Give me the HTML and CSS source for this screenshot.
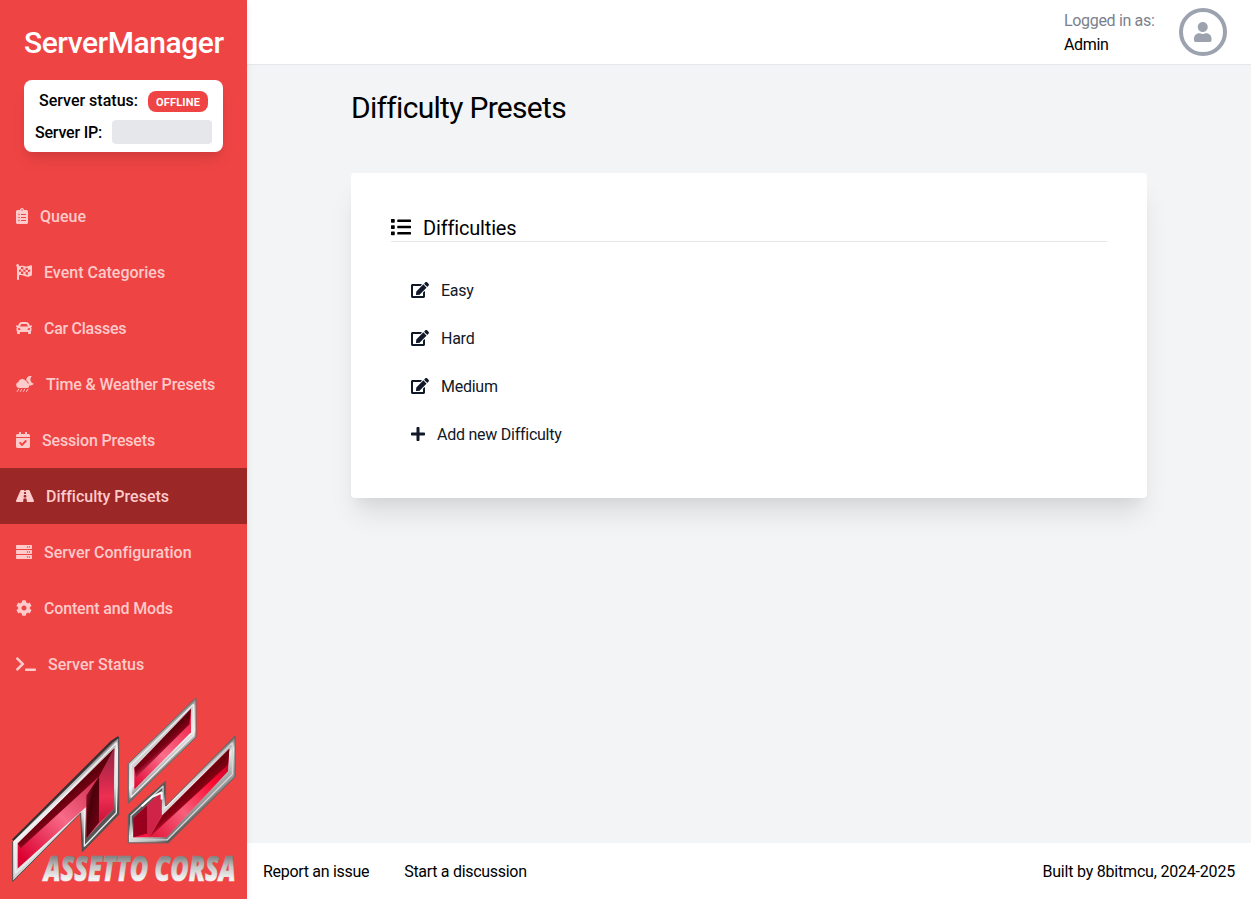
FILE: index.html
```html
<!DOCTYPE html>
<html lang="en">
<head>
<meta charset="utf-8">
<title>ServerManager</title>
<link rel="stylesheet" href="styles.css">
</head>
<body>
<div class="app">
<aside class="sidebar">
  <div class="brand"><span>ServerManager</span></div>
  <div class="status">
    <div class="status-row"><span class="status-label">Server status:</span><span class="badge">OFFLINE</span></div>
    <div class="status-row"><span class="status-ip">Server IP:</span><span class="ip"></span></div>
  </div>
  <nav class="nav">
    <a class="item"><svg width="12" height="16" viewBox="0 0 384 512"><path d="M336 64h-80c0-35.3-28.7-64-64-64s-64 28.7-64 64H48C21.5 64 0 85.5 0 112v352c0 26.5 21.5 48 48 48h288c26.5 0 48-21.5 48-48V112c0-26.5-21.5-48-48-48zM96 424c-13.3 0-24-10.7-24-24s10.7-24 24-24 24 10.7 24 24-10.7 24-24 24zm0-96c-13.3 0-24-10.7-24-24s10.7-24 24-24 24 10.7 24 24-10.7 24-24 24zm0-96c-13.3 0-24-10.7-24-24s10.7-24 24-24 24 10.7 24 24-10.7 24-24 24zm96-192c13.3 0 24 10.7 24 24s-10.7 24-24 24-24-10.7-24-24 10.7-24 24-24zm128 368c0 4.4-3.6 8-8 8H168c-4.4 0-8-3.6-8-8v-16c0-4.4 3.6-8 8-8h144c4.4 0 8 3.6 8 8v16zm0-96c0 4.4-3.6 8-8 8H168c-4.4 0-8-3.6-8-8v-16c0-4.4 3.6-8 8-8h144c4.4 0 8 3.6 8 8v16zm0-96c0 4.4-3.6 8-8 8H168c-4.4 0-8-3.6-8-8v-16c0-4.4 3.6-8 8-8h144c4.4 0 8 3.6 8 8v16z"/></svg><span>Queue</span></a>
    <a class="item"><svg width="16" height="16" viewBox="0 0 16 16"><path fill-rule="evenodd" d="M1.600 0a1.500 1.500 0 0 1 1.200 2.300C6 .8 8 2.400 10.500 2.400c1.600 0 3-.5 4.300-1.100.600-.2 1.200.1 1.200.8v8.600c0 .3-.2.600-.4.700-1.300.8-2.700 1.300-4.300 1.300-2.500 0-4.200-1.600-6.600-1.600-.7 0-1.200.1-1.700.3v3.900c0 .4-.3.700-.7.700h-.6c-.4 0-.7-.3-.7-.7V2.800A1.500 1.500 0 0 1 1.600 0zM5 3.100v2.200l2.300-.1V3zM9.600 3.800v2.200l2.300.1V3.900zM7.300 5.200v2.200l2.300.6V6zM3 5.900v2.200l2-.5V5.300zM11.900 6.100v2.200l2.300-.7V5.400zM5 7.600v2.300l2.300.2V7.400zM9.600 8v2.500l2.300.5V8.300z"/></svg><span>Event Categories</span></a>
    <a class="item tight"><svg width="16" height="16" viewBox="0 0 512 512"><path d="M499.990 176h-59.870l-16.640-41.600C406.380 91.630 365.570 64 319.500 64h-127c-46.060 0-86.880 27.630-103.990 70.400L71.870 176H12.010C4.200 176-1.530 183.340.370 190.910l6 24C7.700 220.250 12.500 224 18.010 224h20.070C24.650 235.730 16 252.780 16 272v48c0 16.120 6.160 30.670 16 41.930V416c0 17.670 14.330 32 32 32h32c17.670 0 32-14.330 32-32v-32h256v32c0 17.670 14.330 32 32 32h32c17.670 0 32-14.330 32-32v-54.070c9.840-11.250 16-25.800 16-41.930v-48c0-19.220-8.650-36.270-22.070-48H494c5.510 0 10.310-3.750 11.640-9.090l6-24c1.890-7.570-3.840-14.910-11.650-14.910zm-352.060-17.830c7.290-18.220 24.940-30.170 44.570-30.170h127c19.630 0 37.280 11.950 44.570 30.170L384 208H128l19.930-49.830zM96 319.800c-19.200 0-32-12.760-32-31.900S76.800 256 96 256s48 28.710 48 47.850-28.800 15.950-48 15.950zm320 0c-19.200 0-48 3.190-48-15.950S396.800 256 416 256s32 12.760 32 31.900-12.800 31.900-32 31.900z"/></svg><span>Car Classes</span></a>
    <a class="item snug"><svg width="18" height="16" viewBox="0 0 18 16"><path d="M3 12a3 3 0 0 1-.6-5.900A4 4 0 0 1 9.600 4.800a2.700 2.700 0 0 1 2 2.500A2.400 2.400 0 0 1 11 12zM15.400 0a.2.200 0 0 1 .1.400 4.500 4.500 0 0 0 2.200 7.300c.2 0 .2.200.1.300a4.800 4.800 0 0 1-5.300 1 3.500 3.500 0 0 0-.1-2.400 3.800 3.800 0 0 0-2.300-2.400A5 5 0 0 1 15.400 0z"/><path d="M2.600 13.200l-1.400 2.300M5.700 13.200l-1.400 2.300M8.800 13.200l-1.400 2.300M11.900 13.200l-1.400 2.300" fill="none" stroke="currentColor" stroke-width="1" stroke-linecap="round"/></svg><span>Time &amp; Weather Presets</span></a>
    <a class="item snug"><svg width="14" height="16" viewBox="0 0 448 512"><path d="M436 160H12c-6.627 0-12-5.373-12-12v-36c0-26.510 21.490-48 48-48h48V12c0-6.627 5.373-12 12-12h40c6.627 0 12 5.373 12 12v52h128V12c0-6.627 5.373-12 12-12h40c6.627 0 12 5.373 12 12v52h48c26.510 0 48 21.490 48 48v36c0 6.627-5.373 12-12 12zM12 192h424c6.627 0 12 5.373 12 12v260c0 26.510-21.490 48-48 48H48c-26.510 0-48-21.490-48-48V204c0-6.627 5.373-12 12-12zm333.296 95.947l-28.169-28.398c-4.667-4.705-12.265-4.736-16.970-.068L194.120 364.665l-45.980-46.352c-4.667-4.705-12.266-4.736-16.971-.068l-28.397 28.170c-4.705 4.667-4.736 12.265-.068 16.970l82.601 83.269c4.667 4.705 12.265 4.736 16.970.068l142.953-141.805c4.705-4.667 4.736-12.265.068-16.970z"/></svg><span>Session Presets</span></a>
    <a class="item active"><svg width="18" height="16" viewBox="0 0 576 512"><path d="M573.190 402.670l-139.790-320C428.430 71.290 417.600 64 405.680 64h-97.590l2.450 23.160c.5 4.720-3.210 8.840-7.960 8.840h-29.160c-4.750 0-8.460-4.120-7.960-8.840L267.910 64h-97.590c-11.930 0-22.760 7.290-27.730 18.670L2.800 402.670C-6.450 423.860 8.310 448 30.540 448h196.840l10.310-97.680c.86-8.140 7.720-14.320 15.910-14.320h68.800c8.190 0 15.050 6.180 15.910 14.320L348.620 448h196.840c22.230 0 36.990-24.140 27.730-45.330zM260.400 135.160a8 8 0 0 1 7.960-7.160h39.290c4.090 0 7.530 3.090 7.960 7.160l4.600 43.580c.75 7.090-4.810 13.260-11.930 13.260h-40.540c-7.130 0-12.680-6.170-11.930-13.260l4.590-43.580zM315.640 304h-55.290c-9.500 0-16.910-8.230-15.910-17.680l5.070-48c.86-8.140 7.720-14.320 15.910-14.320h45.150c8.190 0 15.050 6.180 15.910 14.320l5.070 48c1 9.450-6.410 17.680-15.910 17.680z"/></svg><span>Difficulty Presets</span></a>
    <a class="item"><svg width="16" height="16" viewBox="0 0 512 512"><defs><path id="unit" d="M480 160H32c-17.673 0-32-14.327-32-32V64c0-17.673 14.327-32 32-32h448c17.673 0 32 14.327 32 32v64c0 17.673-14.327 32-32 32zm-48-88c-13.255 0-24 10.745-24 24s10.745 24 24 24 24-10.745 24-24-10.745-24-24-24zm-64 0c-13.255 0-24 10.745-24 24s10.745 24 24 24 24-10.745 24-24-10.745-24-24-24z"/></defs><use href="#unit"/><use href="#unit" y="160"/><use href="#unit" y="320"/></svg><span>Server Configuration</span></a>
    <a class="item snug"><svg width="16" height="16" viewBox="0 0 512 512"><path d="M487.400 315.700l-42.600-24.600c4.300-23.200 4.300-47 0-70.200l42.600-24.600c4.900-2.800 7.100-8.600 5.500-14-11.100-35.600-30-67.800-54.700-94.600-3.800-4.100-10-5.100-14.800-2.300L380.800 110c-17.900-15.400-38.500-27.300-60.800-35.100V25.800c0-5.600-3.900-10.500-9.400-11.700-36.700-8.200-74.300-7.800-109.200 0-5.500 1.200-9.400 6.100-9.400 11.700V75c-22.200 7.900-42.800 19.800-60.800 35.100L88.700 85.500c-4.900-2.800-11-1.900-14.800 2.300-24.700 26.700-43.600 58.900-54.700 94.600-1.700 5.400.6 11.200 5.500 14L67.300 221c-4.300 23.200-4.300 47 0 70.200l-42.600 24.600c-4.900 2.800-7.100 8.600-5.500 14 11.100 35.600 30 67.800 54.700 94.600 3.800 4.100 10 5.100 14.800 2.300l42.600-24.600c17.900 15.400 38.500 27.300 60.800 35.100v49.200c0 5.600 3.900 10.500 9.400 11.700 36.700 8.200 74.300 7.800 109.200 0 5.500-1.200 9.400-6.100 9.400-11.700v-49.200c22.200-7.900 42.800-19.800 60.800-35.100l42.600 24.600c4.900 2.800 11 1.900 14.800-2.300 24.700-26.700 43.600-58.900 54.700-94.600 1.500-5.500-.7-11.300-5.600-14.100zM256 336c-44.100 0-80-35.900-80-80s35.900-80 80-80 80 35.900 80 80-35.900 80-80 80z"/></svg><span>Content and Mods</span></a>
    <a class="item"><svg width="20" height="16" viewBox="0 0 640 512"><path d="M257.981 272.971L63.638 467.314c-9.373 9.373-24.569 9.373-33.941 0L7.029 444.647c-9.357-9.357-9.375-24.522-.04-33.901L161.011 256 6.990 101.255c-9.335-9.379-9.317-24.544.04-33.901l22.667-22.667c9.373-9.373 24.569-9.373 33.941 0L257.981 239.030c9.373 9.372 9.373 24.568 0 33.941zM640 456v-32c0-13.255-10.745-24-24-24H312c-13.255 0-24 10.745-24 24v32c0 13.255 10.745 24 24 24h304c13.255 0 24-10.745 24-24z"/></svg><span>Server Status</span></a>
  </nav>
  <svg class="logo" viewBox="36 20 672 560">
    <defs>
      <linearGradient id="chromeA" gradientUnits="userSpaceOnUse" x1="130" y1="270" x2="270" y2="430"><stop offset="0" stop-color="#2c2c2e"/><stop offset=".22" stop-color="#777"/><stop offset=".38" stop-color="#f4f4f4"/><stop offset=".75" stop-color="#d8d8d8"/><stop offset="1" stop-color="#555"/></linearGradient>
      <linearGradient id="chromeB" gradientUnits="userSpaceOnUse" x1="445" y1="135" x2="525" y2="225"><stop offset="0" stop-color="#444"/><stop offset=".25" stop-color="#ccc"/><stop offset=".7" stop-color="#eee"/><stop offset="1" stop-color="#444"/></linearGradient>
      <linearGradient id="chromeC" gradientUnits="userSpaceOnUse" x1="520" y1="290" x2="600" y2="385"><stop offset="0" stop-color="#555"/><stop offset=".25" stop-color="#eee"/><stop offset=".75" stop-color="#999"/><stop offset="1" stop-color="#444"/></linearGradient>
      <linearGradient id="redA" gradientUnits="userSpaceOnUse" x1="70" y1="510" x2="330" y2="230"><stop offset="0" stop-color="#dc0030"/><stop offset=".45" stop-color="#f76a88"/><stop offset="1" stop-color="#c2183c"/></linearGradient>
      <linearGradient id="redB" gradientUnits="userSpaceOnUse" x1="400" y1="290" x2="580" y2="110"><stop offset="0" stop-color="#e00a36"/><stop offset=".5" stop-color="#fb6e8b"/><stop offset="1" stop-color="#f02a50"/></linearGradient>
      <linearGradient id="redC" gradientUnits="userSpaceOnUse" x1="460" y1="430" x2="690" y2="220"><stop offset="0" stop-color="#e51e42"/><stop offset=".35" stop-color="#f7607c"/><stop offset=".75" stop-color="#fa0a32"/><stop offset="1" stop-color="#c80028"/></linearGradient>
      <linearGradient id="shadeA" gradientUnits="userSpaceOnUse" x1="180" y1="330" x2="215" y2="372"><stop offset="0" stop-color="#5c000c"/><stop offset=".55" stop-color="#7d0015"/><stop offset="1" stop-color="#c92a4b"/></linearGradient>
      <linearGradient id="shadeB" gradientUnits="userSpaceOnUse" x1="485" y1="150" x2="510" y2="178"><stop offset="0" stop-color="#5c000c"/><stop offset=".5" stop-color="#800016"/><stop offset="1" stop-color="#c92a4b"/></linearGradient>
      <linearGradient id="shadeC" gradientUnits="userSpaceOnUse" x1="570" y1="295" x2="595" y2="325"><stop offset="0" stop-color="#6c000c"/><stop offset=".6" stop-color="#8c0014"/><stop offset="1" stop-color="#c01033"/></linearGradient>
      <linearGradient id="legA" x1="0" y1="0" x2="1" y2="1"><stop offset="0" stop-color="#b01c3c"/><stop offset=".4" stop-color="#4a0009"/><stop offset="1" stop-color="#7c0018"/></linearGradient>
      <linearGradient id="sideA" x1="0" y1="0" x2="0" y2="1"><stop offset="0" stop-color="#8f2a45"/><stop offset=".35" stop-color="#c4284a"/><stop offset=".65" stop-color="#ee2f52"/><stop offset="1" stop-color="#c8123a"/></linearGradient>
      <linearGradient id="silver" x1="0" y1="0" x2="0" y2="1"><stop offset=".3" stop-color="#858585"/><stop offset=".5" stop-color="#c4c4c4"/><stop offset=".75" stop-color="#f2f2f2"/></linearGradient>
    </defs>
    <g stroke-linejoin="round">
      <path d="M356 142V375L247 486L242 370L38 576V456Z" fill="url(#chromeA)" stroke="#4b4b4d" stroke-width="3"/>
      <path d="M349 160V370L253 470V355L47 550V460L140 370L153 359Z" fill="none" stroke="#ededed" stroke-width="4"/>
      <path d="M355 143L335 156L38 452" fill="none" stroke="#303033" stroke-width="6"/>
      <path d="M343 176L341 358L259 447V352L53 537V462Z" fill="url(#redA)"/>
      <path d="M343 176L298 260L62 476L53 462Z" fill="url(#shadeA)"/>
      <path d="M298 260V398L259 447V318Z" fill="url(#legA)"/>
      <path d="M343 176L341 358L298 400V262Z" fill="url(#sideA)"/>
      <path d="M588 25V143L385 341V222Z" fill="url(#chromeB)" stroke="#666" stroke-width="3"/>
      <path d="M580 45V138L393 323V227Z" fill="none" stroke="#eee" stroke-width="4"/>
      <path d="M573 58V128L403 300V235Z" fill="url(#redB)"/>
      <path d="M573 58L568 105L408 264L403 235Z" fill="url(#shadeB)"/>
      <path d="M705 140V262L505 460H385V375L497 275V350Z" fill="url(#chromeC)" stroke="#606060" stroke-width="3"/>
      <path d="M697 160V254L502 451H393V379L489 290V368Z" fill="none" stroke="#d5d5d5" stroke-width="4"/>
      <path d="M688 178L684 245L500 443H400V386L485 305V378Z" fill="url(#redC)"/>
      <path d="M688 178L684 226L450 442L487 378Z" fill="url(#shadeC)"/>
      <path d="M400 386L442 347V438L400 443Z" fill="#98001d"/>
      <path d="M442 347L485 305V378L450 442L442 430Z" fill="#cf2447"/>
      <path d="M450 442L400 443L442 432Z" fill="#ff1744"/>
      <path d="M425 350L455 323L485 309V330" fill="none" stroke="#fff" stroke-width="6"/>
    </g>
    <text class="logo-text" x="131" y="573" textLength="576" lengthAdjust="spacingAndGlyphs">ASSETTO CORSA</text>
  </svg>
</aside>
<div class="page">
  <header class="topbar">
    <div class="user"><span class="muted">Logged in as:</span><span class="name">Admin</span></div>
    <div class="avatar"><svg width="17.500" height="20" viewBox="0 0 448 512"><path d="M224 256c70.700 0 128-57.300 128-128S294.700 0 224 0 96 57.300 96 128s57.300 128 128 128zm89.600 32h-16.700c-22.200 10.200-46.900 16-72.900 16s-50.600-5.800-72.900-16h-16.700C60.200 288 0 348.200 0 422.400V464c0 26.500 21.500 48 48 48h352c26.500 0 48-21.500 48-48v-41.600c0-74.200-60.200-134.400-134.400-134.400z"/></svg></div>
  </header>
  <main class="main">
    <h1 class="title"><span>Difficulty Presets</span></h1>
    <section class="card">
      <h2 class="card-head"><svg width="20" height="20" viewBox="0 0 512 512"><path d="M80 368H16a16 16 0 0 0-16 16v64a16 16 0 0 0 16 16h64a16 16 0 0 0 16-16v-64a16 16 0 0 0-16-16zm0-320H16A16 16 0 0 0 0 64v64a16 16 0 0 0 16 16h64a16 16 0 0 0 16-16V64a16 16 0 0 0-16-16zm0 160H16a16 16 0 0 0-16 16v64a16 16 0 0 0 16 16h64a16 16 0 0 0 16-16v-64a16 16 0 0 0-16-16zm416 176H176a16 16 0 0 0-16 16v32a16 16 0 0 0 16 16h320a16 16 0 0 0 16-16v-32a16 16 0 0 0-16-16zm0-320H176a16 16 0 0 0-16 16v32a16 16 0 0 0 16 16h320a16 16 0 0 0 16-16V80a16 16 0 0 0-16-16zm0 160H176a16 16 0 0 0-16 16v32a16 16 0 0 0 16 16h320a16 16 0 0 0 16-16v-32a16 16 0 0 0-16-16z"/></svg><span>Difficulties</span></h2>
      <svg width="0" height="0" class="defs"><symbol id="edit" viewBox="0 0 576 512"><path d="M402.600 83.200l90.200 90.200c3.800 3.800 3.800 10 0 13.800L274.400 405.600l-92.800 10.300c-12.400 1.400-22.900-9.100-21.500-21.500l10.300-92.800L388.800 83.200c3.800-3.800 10-3.800 13.800 0zm162-22.900l-48.800-48.800c-15.200-15.200-39.900-15.200-55.200 0l-35.400 35.400c-3.800 3.800-3.800 10 0 13.800l90.200 90.200c3.800 3.800 10 3.800 13.800 0l35.400-35.400c15.200-15.300 15.200-40 0-55.200zM384 346.200V448H64V128h229.800c3.200 0 6.200-1.300 8.500-3.500l40-40c7.600-7.600 2.200-20.500-8.500-20.500H48C21.500 64 0 85.500 0 112v352c0 26.500 21.500 48 48 48h352c26.500 0 48-21.500 48-48V306.200c0-10.700-12.900-16-20.500-8.500l-40 40c-2.200 2.300-3.500 5.300-3.500 8.500z"/></symbol></svg>
      <div class="list">
        <a class="row"><svg width="18" height="16"><use href="#edit"/></svg><span>Easy</span></a>
        <a class="row"><svg width="18" height="16"><use href="#edit"/></svg><span>Hard</span></a>
        <a class="row"><svg width="18" height="16"><use href="#edit"/></svg><span>Medium</span></a>
        <a class="row"><svg width="14" height="16" viewBox="0 0 448 512"><path d="M416 208H272V64c0-17.670-14.330-32-32-32h-32c-17.670 0-32 14.330-32 32v144H32c-17.670 0-32 14.330-32 32v32c0 17.670 14.330 32 32 32h144v144c0 17.670 14.330 32 32 32h32c17.670 0 32-14.330 32-32V304h144c17.670 0 32-14.330 32-32v-32c0-17.670-14.330-32-32-32z"/></svg><span>Add new Difficulty</span></a>
      </div>
    </section>
  </main>
  <footer class="footer"><span class="link">Report an issue</span><span class="link">Start a discussion</span><span class="built">Built by 8bitmcu, 2024-2025</span></footer>
</div>
</div>
</body>
</html>
```
FILE: styles.css
```css
* { box-sizing: border-box; }
body { margin: 0; font: 400 16px/24px Roboto, "Liberation Sans", sans-serif; font-variant-ligatures: none; color: #000; background: #f3f4f6; }
svg { fill: currentColor; display: block; flex: none; }
.app { display: flex; height: 899px; overflow: hidden; }
.sidebar { width: 247px; flex: none; background: #ef4444; display: flex; flex-direction: column; z-index: 1; box-shadow: 0 4px 8px rgba(0,0,0,.07); }
.brand { height: 80px; padding: 24px 24px 0; font-size: 30px; line-height: 37px; font-weight: 500; letter-spacing: -.45px; color: #fff; white-space: nowrap; }
.status { margin: 0 24px; height: 72px; padding: 9px 0 8px; display: flex; flex-direction: column; gap: 7px; background: #fff; border-radius: 8px; box-shadow: 0 10px 15px -3px rgba(0,0,0,.1), 0 4px 6px -2px rgba(0,0,0,.05); font-weight: 500; }
.status-row { display: flex; justify-content: center; align-items: center; gap: 10px; height: 24px; white-space: nowrap; }
.status-ip { padding-top: 2px; letter-spacing: -.2px; }
.badge { width: 60px; height: 21px; border-radius: 8px; background: #ef4444; color: #fff; font-size: 11px; line-height: 23px; font-weight: 700; letter-spacing: .2px; text-align: center; }
.ip { width: 100px; height: 24px; border-radius: 4px; background: #e5e7eb; }
.nav { margin-top: 36px; }
.item { display: flex; align-items: center; gap: 12px; height: 56px; padding: 0 16px; color: #fecaca; font-weight: 500; white-space: nowrap; }
.item span { padding-top: 2px; }
.tight { letter-spacing: -.27px; }
.snug { letter-spacing: -.16px; }
.active { background: #9b2727; }
.logo { width: 224px; height: 187px; margin: 4px 0 0 12px; overflow: visible; }
.logo-text { font: italic 800 107px "Open Sans", sans-serif; fill: url(#silver); stroke: url(#silver); stroke-width: 2px; }
.page { flex: 1; display: flex; flex-direction: column; }
.topbar { height: 65px; background: #fff; border-bottom: 1px solid #e5e7eb; display: flex; justify-content: flex-end; padding: 8px 24px 0 0; gap: 24px; }
.user { display: flex; flex-direction: column; width: 91px; padding-top: 1px; letter-spacing: -.33px; white-space: nowrap; }
.muted { color: #7b818c; }
.avatar { width: 48px; height: 48px; border: 4px solid #9ca3af; border-radius: 50%; color: #9ca3af; display: flex; align-items: center; justify-content: center; }
.main { flex: 1; padding: 23px 104px 0; }
.title { margin: 0; font-size: 30px; line-height: 40px; font-weight: 400; height: 85px; letter-spacing: -.7px; }
.card { height: 325px; background: #fff; border-radius: 4px; padding: 40px; box-shadow: 0 20px 25px -5px rgba(0,0,0,.1), 0 10px 10px -5px rgba(0,0,0,.04); }
.card-head { margin: 0; height: 29px; display: flex; align-items: center; gap: 12px; font-size: 20px; line-height: 29px; font-weight: 400; letter-spacing: -.17px; border-bottom: 1px solid #e5e7eb; }
.card-head span { padding-top: 2px; }
.list { padding: 24px 20px 0; color: #111827; }
.defs { position: absolute; }
.row { display: flex; align-items: center; gap: 12px; height: 48px; letter-spacing: -.25px; }
.row span { padding-top: 2px; }
.footer { height: 56px; background: #fff; display: flex; align-items: center; padding: 2px 16px 0; gap: 35px; line-height: 22px; }
.link { letter-spacing: -.3px; }
.built { margin-left: auto; letter-spacing: -.2px; }
```
